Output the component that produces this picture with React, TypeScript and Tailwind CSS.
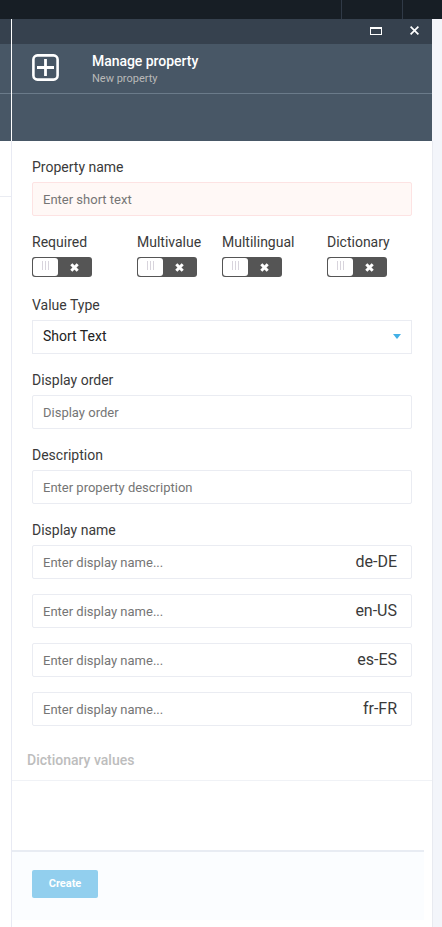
import React from "react";

const toggles = [
  { label: "Required", width: "w-[105px]" },
  { label: "Multivalue", width: "w-[85px]" },
  { label: "Multilingual", width: "w-[105px]" },
  { label: "Dictionary", width: "w-[85px]" },
];

const languages = ["de-DE", "en-US", "es-ES", "fr-FR"];

function Label({ children }: { children: React.ReactNode }) {
  return (
    <div className="mb-[5px] h-5 whitespace-nowrap text-[14px] leading-5 text-[#3a3a3a]">
      {children}
    </div>
  );
}

function TextField({ placeholder, invalid = false }: { placeholder: string; invalid?: boolean }) {
  return (
    <input
      className={`block h-[34px] w-full rounded-[2px] border px-[10px] text-[13px] text-[#333] outline-none placeholder:text-[#757575] ${
        invalid ? "border-[#fde3e3] bg-[#fff8f6]" : "border-[#eaecf2] bg-white"
      }`}
      placeholder={placeholder}
    />
  );
}

function Toggle() {
  return (
    <div className="flex h-5 w-[60px] rounded-[3px] bg-[#555] p-px">
      <div className="flex h-[18px] w-[25px] justify-center gap-[2px] rounded-[3px] bg-white pt-[3px]">
        <i className="h-[9px] w-px bg-[#d8d4dc]" />
        <i className="h-[9px] w-px bg-[#d8d4dc]" />
        <i className="h-[9px] w-px bg-[#d8d4dc]" />
      </div>
      <div className="flex flex-1 items-center justify-center pt-px">
        <svg width="9" height="9" viewBox="0 0 9 9">
          <path d="M1.3 1.3L7.7 7.7M7.7 1.3L1.3 7.7" stroke="#fff" strokeWidth="3" />
        </svg>
      </div>
    </div>
  );
}

export default function App() {
  return (
    <div className="flex h-[927px] w-[442px] flex-col overflow-hidden bg-[#f4f5fa] font-['Roboto',sans-serif]">
      <div className="flex h-[19px] shrink-0 justify-end bg-[#171e25]">
        <div className="w-[61px] border-l border-[#303a47]" />
        <div className="w-[40px] border-l border-[#303a47]" />
      </div>
      <div className="flex min-h-0 flex-1">
        <div className="flex w-[11px] flex-col bg-white">
          <div className="h-[25px] bg-[#36414e]" />
          <div className="h-[50px] border-b border-[#6b7b8a] bg-[#485766]" />
          <div className="h-[47px] bg-[#485766]" />
          <div className="h-[56px] border-b border-[#eaecf2]" />
        </div>
        <div className="flex w-px flex-col bg-[#e8eaf3]">
          <div className="h-[122px] bg-white" />
        </div>
        <main className="flex w-[420px] flex-col bg-white">
          <header className="shrink-0">
            <div className="flex h-[25px] items-start justify-end bg-[#36414e] pr-[13px] pt-[8px]">
              <div className="mr-[28px] h-[8px] w-[12px] border border-t-2 border-white" />
              <svg width="9" height="9" viewBox="0 0 9 9" className="mt-[-1px]">
                <path d="M0.6 0.6L8.4 8.4M8.4 0.6L0.6 8.4" stroke="#fff" strokeWidth="1.7" />
              </svg>
            </div>
            <div className="flex h-[50px] border-b border-[#6b7b8a] bg-[#485766] pl-5">
              <svg width="27" height="27" viewBox="0 0 27 27" fill="none" stroke="#fff" className="mr-[33px] mt-[10px]">
                <rect x="1.4" y="1.4" width="24.2" height="24.2" rx="4" strokeWidth="2.6" />
                <path d="M13.5 5V22M5 13.5H22" strokeWidth="2.8" />
              </svg>
              <div className="pt-[8px]">
                <div className="text-[14px] font-medium leading-[18px] tracking-[-0.04px] text-white">Manage property</div>
                <div className="mt-px text-[11px] leading-4 text-[#b9b9b9]">New property</div>
              </div>
            </div>
            <div className="h-[47px] bg-[#485766]" />
          </header>

          <section className="shrink-0 px-5 pt-4">
            <Label>Property name</Label>
            <TextField placeholder="Enter short text" invalid />
            <div className="mt-4 flex">
              {toggles.map((t) => (
                <div key={t.label} className={`shrink-0 ${t.width}`}>
                  <Label>{t.label}</Label>
                  <Toggle />
                </div>
              ))}
            </div>
            <div className="mt-[18px]">
              <Label>Value Type</Label>
              <div className="flex h-[34px] items-center justify-between border border-[#eaecf2] px-[10px] pb-[2px] text-[14px] text-[#222]">
                <span>Short Text</span>
                <svg width="8" height="5" viewBox="0 0 8 5">
                  <path d="M0 0H8L4 5Z" fill="#43b0e6" />
                </svg>
              </div>
            </div>
            <div className="mt-4">
              <Label>Display order</Label>
              <TextField placeholder="Display order" />
            </div>
            <div className="mt-4">
              <Label>Description</Label>
              <TextField placeholder="Enter property description" />
            </div>
            <div className="mt-4">
              <Label>Display name</Label>
              <div className="flex flex-col gap-[15px]">
                {languages.map((language) => (
                  <div key={language} className="relative">
                    <TextField placeholder="Enter display name..." />
                    <span className="absolute right-[15px] top-[7px] text-[16px] leading-5 text-[#3a3a3a]">{language}</span>
                  </div>
                ))}
              </div>
            </div>
          </section>

          <h2 className="mt-[24px] h-[31px] shrink-0 border-b border-[#f0f2f6] pl-[15px] text-[14px] font-medium leading-5 text-[#bdbdbd]">
            Dictionary values
          </h2>
          <footer className="mt-[69px] h-[70px] w-[412px] shrink-0 border-t-2 border-[#e8ecf3] bg-[#fbfdff] pl-5 pt-[18px]">
            <button className="block h-7 w-[66px] rounded-[2px] bg-[#92cfee] pb-px text-[11px] font-bold leading-[26px] text-white">
              Create
            </button>
          </footer>
        </main>
        <div className="flex flex-1 flex-col">
          <div className="h-[122px] bg-[#f4f5fa]" />
          <div className="flex-1 border-l border-[#e8eaf0] bg-[#f3f5fa]" />
        </div>
      </div>
    </div>
  );
}
